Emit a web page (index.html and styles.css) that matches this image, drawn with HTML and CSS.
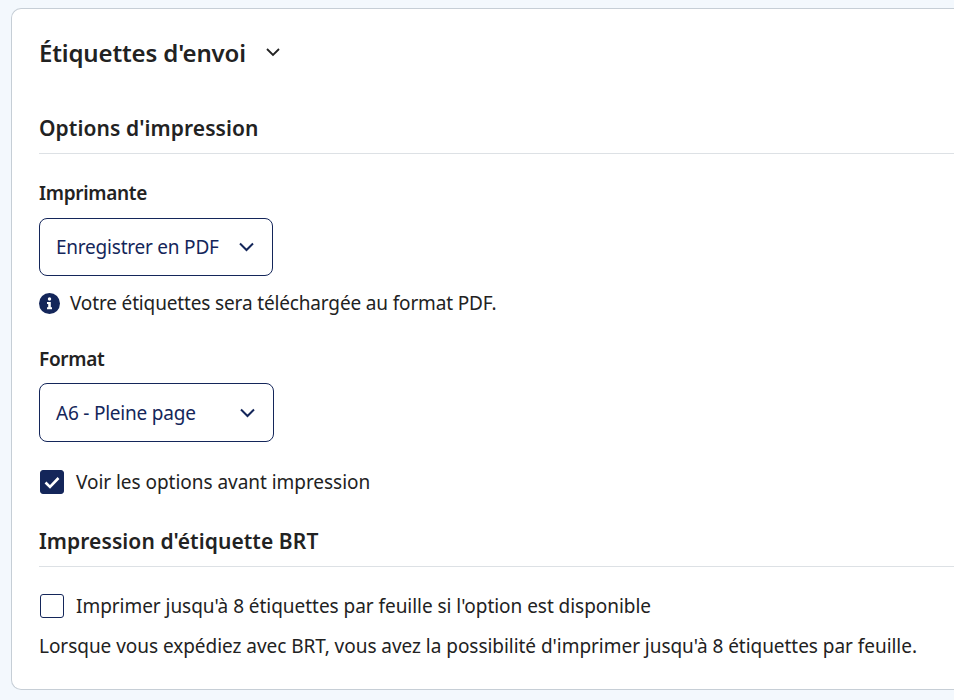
FILE: index.html
```html
<!DOCTYPE html>
<html lang="fr">
<head>
    <meta charset="UTF-8">
    <title>Étiquettes d'envoi</title>
    <link rel="stylesheet" href="styles.css">
</head>
<body>
    <div class="card">
        <div class="card-title">
            <h1>Étiquettes d'envoi</h1>
            <svg class="title-chevron" width="14" height="9" viewBox="0 0 14 9"><path d="M1 1 7 7l6-6" fill="none" stroke="#222" stroke-width="1.800"/></svg>
        </div>

        <h2 class="section first">Options d'impression</h2>

        <p class="label">Imprimante</p>
        <div class="select printer">
            <span>Enregistrer en PDF</span>
            <svg width="15" height="10" viewBox="0 0 15 10"><path d="M1 1.500 7.500 8 14 1.500" fill="none" stroke="#14265a" stroke-width="2"/></svg>
        </div>
        <div class="info">
            <svg width="21" height="21" viewBox="0 0 21 21"><circle cx="10.500" cy="10.500" r="10.500" fill="#14265a"/><circle cx="10.500" cy="6" r="1.700" fill="#fff"/><path d="M8 9h3.800v5.300h1.200v1.900H8v-1.900h1.200v-3.400H8z" fill="#fff"/></svg>
            <span>Votre étiquettes sera téléchargée au format PDF.</span>
        </div>

        <p class="label format">Format</p>
        <div class="select paper">
            <span>A6 - Pleine page</span>
            <svg width="15" height="10" viewBox="0 0 15 10"><path d="M1 1.500 7.500 8 14 1.500" fill="none" stroke="#14265a" stroke-width="2"/></svg>
        </div>
        <label class="check preview">
            <span class="box checked">
                <svg width="16" height="13" viewBox="0 0 16 13"><path d="M1.500 6.500 6 11 14.500 2" fill="none" stroke="#fff" stroke-width="2.600"/></svg>
            </span>
            <span>Voir les options avant impression</span>
        </label>

        <h2 class="section">Impression d'étiquette BRT</h2>

        <label class="check multi">
            <span class="box"></span>
            <span>Imprimer jusqu'à 8 étiquettes par feuille si l'option est disponible</span>
        </label>
        <p class="note">Lorsque vous expédiez avec BRT, vous avez la possibilité d'imprimer jusqu'à 8 étiquettes par feuille.</p>
    </div>
</body>
</html>
```

FILE: styles.css
```css
html, body {
    height: 100%;
}
body {
    margin: 0;
    background-color: #f3f8fd;
    font-family: "Noto Sans", "Open Sans", sans-serif;
    font-size: 19px;
    letter-spacing: -0.04px;
    color: #222;
    overflow: hidden;
}
.card {
    box-sizing: border-box;
    width: 943px;
    height: 682px;
    margin: 8px 0 0 11px;
    padding: 0 0 0 27px;
    background-color: #fff;
    border: 1px solid #c6ced6;
    border-right: 0;
    border-radius: 10px 0 0 10px;
}
.card-title {
    display: flex;
    align-items: center;
    gap: 20px;
    height: 86px;
}
h1 {
    margin: 0;
    font-size: 24px;
    font-weight: 600;
    letter-spacing: -0.15px;
}
.section {
    margin: 31px 0 0;
    padding-bottom: 10px;
    font-size: 21px;
    font-weight: 600;
    line-height: 30px;
    letter-spacing: 0.08px;
    border-bottom: 1px solid #dde1e5;
}
.section.first {
    margin-top: 18px;
}
.label {
    margin: 26px 0 12px;
    font-weight: 600;
    line-height: 26px;
    letter-spacing: -0.3px;
}
.format {
    margin: 31px 0 11px;
}
.select {
    box-sizing: border-box;
    display: flex;
    align-items: center;
    justify-content: space-between;
    height: 58px;
    padding: 0 18px 0 16px;
    color: #14265a;
    letter-spacing: -0.22px;
    border: 1px solid #14265a;
    border-radius: 8px;
}
.printer {
    width: 234px;
}
.paper {
    width: 235px;
    height: 59px;
}
.info {
    display: flex;
    align-items: center;
    gap: 10px;
    margin-top: 15px;
    line-height: 24px;
    letter-spacing: -0.15px;
}
.check {
    display: flex;
    align-items: center;
    gap: 12px;
    line-height: 26px;
}
.box {
    box-sizing: border-box;
    display: flex;
    align-items: center;
    justify-content: center;
    width: 24px;
    height: 24px;
    margin-left: 1px;
    border: 1px solid #14265a;
    border-radius: 3px;
}
.checked {
    background-color: #14265a;
}
.preview {
    margin-top: 27px;
}
.multi {
    margin-top: 26px;
}
.note {
    margin: 14px 0 0;
    line-height: 26px;
}
```
